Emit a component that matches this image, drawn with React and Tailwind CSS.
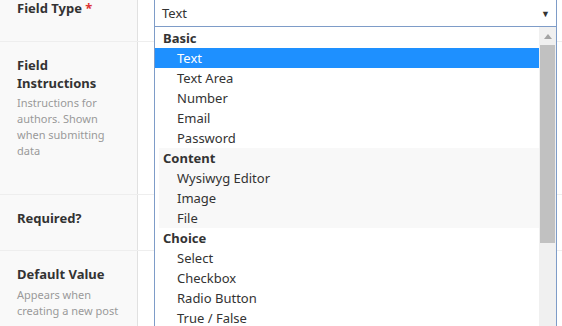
import React from "react";

const groups = [
  { label: "Basic", items: ["Text", "Text Area", "Number", "Email", "Password"] },
  { label: "Content", items: ["Wysiwyg Editor", "Image", "File"], shaded: true },
  { label: "Choice", items: ["Select", "Checkbox", "Radio Button", "True / False"] },
];

function Row({ h, children, last }) {
  return (
    <div className={`flex ${last ? "" : "border-b border-[#eeeeee]"}`} style={{ height: h }}>
      <div className="w-[138px] shrink-0 bg-[#f9f9f9] border-r border-[#e1e1e1] pl-[17px] pr-2">
        {children}
      </div>
      <div className="flex-1 bg-white" />
    </div>
  );
}

export default function App() {
  return (
    <div
      className="relative w-[562px] h-[326px] overflow-hidden bg-white text-[#333]"
      style={{ fontFamily: '"Noto Sans", "Open Sans", sans-serif' }}
    >
      <div className="flex flex-col">
        <Row h={42}>
          <div className="text-[13px] leading-[16px] font-bold pt-[0px]">
            Field Type <span className="text-[#dd3333]">*</span>
          </div>
        </Row>
        <Row h={153}>
          <div className="pt-[14px] text-[13px] leading-[18px] font-bold">Field Instructions</div>
          <div className="mt-[3px] text-[11px] leading-[16px] text-[#999999]">
            Instructions for authors. Shown when submitting data
          </div>
        </Row>
        <Row h={56}>
          <div className="pt-[14px] text-[13px] leading-[18px] font-bold">Required?</div>
        </Row>
        <Row h={80} last>
          <div className="pt-[14px] text-[13px] leading-[18px] font-bold">Default Value</div>
          <div className="mt-[4px] text-[11px] leading-[16px] text-[#999999]">
            Appears when creating a new post
          </div>
        </Row>
      </div>

      {/* select box */}
      <div className="absolute left-[154px] top-[-2px] w-[403px] h-[29px] border border-[#7e9cc8] bg-white flex items-center justify-between pl-[7px] pr-[6px]">
        <span className="text-[13px] pt-[2px]">Text</span>
        <span className="text-[9px] text-[#333] pt-[2px]">▼</span>
      </div>

      {/* dropdown */}
      <div className="absolute left-[154px] top-[27px] w-[403px] h-[310px] border-x border-[#7e9cc8] bg-white flex">
        <div className="flex-1 pt-[1px]">
          {groups.map((g) => (
            <div key={g.label}>
              <div
                className={`h-[20px] leading-[20px] text-[13px] font-bold ${
                  g.shaded ? "bg-[#f8f8f8] ml-[4px] pl-[4px]" : "pl-[8px]"
                }`}
              >
                {g.label}
              </div>
              {g.items.map((it, i) => {
                const sel = g.label === "Basic" && i === 0;
                return (
                  <div
                    key={it}
                    className={`h-[20px] leading-[20px] text-[13px] ${
                      sel
                        ? "bg-[#1e90ff] text-white pl-[22px]"
                        : g.shaded
                        ? "bg-[#f8f8f8] ml-[4px] pl-[18px]"
                        : "pl-[22px]"
                    }`}
                  >
                    {it}
                  </div>
                );
              })}
            </div>
          ))}
        </div>
        <div className="w-[17px] bg-[#f0f0f0] flex flex-col items-center pt-[1px]">
          <div className="h-[17px] w-full flex items-center justify-center">
            <svg width="8" height="5" viewBox="0 0 8 5">
              <path d="M0 5 L4 0 L8 5 Z" fill="#a3a3a3" />
            </svg>
          </div>
          <div className="w-[15px] h-[198px] bg-[#c1c1c1]" />
        </div>
      </div>
    </div>
  );
}
